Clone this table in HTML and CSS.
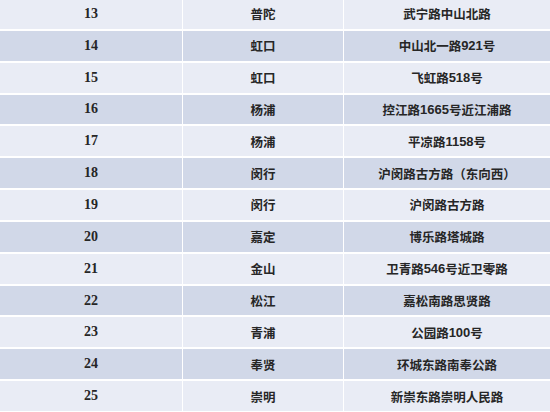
FILE: index.html
```html
<!DOCTYPE html>
<html lang="zh">
<head>
<meta charset="utf-8">
<link rel="stylesheet" href="styles.css">
</head>
<body>
<div class="table">
  <div class="cell num odd">13</div><div class="cell odd">普陀</div><div class="cell odd">武宁路中山北路</div>
  <div class="cell num even">14</div><div class="cell even">虹口</div><div class="cell even">中山北一路<span class="d">921</span>号</div>
  <div class="cell num odd">15</div><div class="cell odd">虹口</div><div class="cell odd">飞虹路<span class="d">518</span>号</div>
  <div class="cell num even">16</div><div class="cell even">杨浦</div><div class="cell even">控江路<span class="d">1665</span>号近江浦路</div>
  <div class="cell num odd">17</div><div class="cell odd">杨浦</div><div class="cell odd">平凉路<span class="d">1158</span>号</div>
  <div class="cell num even">18</div><div class="cell even">闵行</div><div class="cell even">沪闵路古方路（东向西）</div>
  <div class="cell num odd">19</div><div class="cell odd">闵行</div><div class="cell odd">沪闵路古方路</div>
  <div class="cell num even">20</div><div class="cell even">嘉定</div><div class="cell even">博乐路塔城路</div>
  <div class="cell num odd">21</div><div class="cell odd">金山</div><div class="cell odd">卫青路<span class="d">546</span>号近卫零路</div>
  <div class="cell num even">22</div><div class="cell even">松江</div><div class="cell even">嘉松南路思贤路</div>
  <div class="cell num odd">23</div><div class="cell odd">青浦</div><div class="cell odd">公园路<span class="d">100</span>号</div>
  <div class="cell num even">24</div><div class="cell even">奉贤</div><div class="cell even">环城东路南奉公路</div>
  <div class="cell num odd">25</div><div class="cell odd">崇明</div><div class="cell odd">新崇东路崇明人民路</div>
</div>
</body>
</html>
```
FILE: styles.css
```css
html, body {
  margin: 0;
  padding: 0;
  background: #ffffff;
}
.table {
  width: 550px;
  height: 412px;
  display: grid;
  grid-template-columns: 182px 160px 1fr;
  grid-template-rows: repeat(13, 1fr);
  column-gap: 1px;
  row-gap: 2px;
  margin-top: -1px;
  background: #ffffff;
}
.cell {
  display: flex;
  align-items: center;
  justify-content: center;
  font-family: "Liberation Sans", "Noto Sans CJK SC", sans-serif;
  font-weight: 700;
  font-size: 12.5px;
  color: #262626;
}
.num {
  font-family: "Liberation Serif", "Noto Sans CJK SC", serif;
  font-size: 14px;
}
.odd { background: #e9ecf5; }
.even { background: #d1d8e8; }
.d { font-size: 13px; }
```
